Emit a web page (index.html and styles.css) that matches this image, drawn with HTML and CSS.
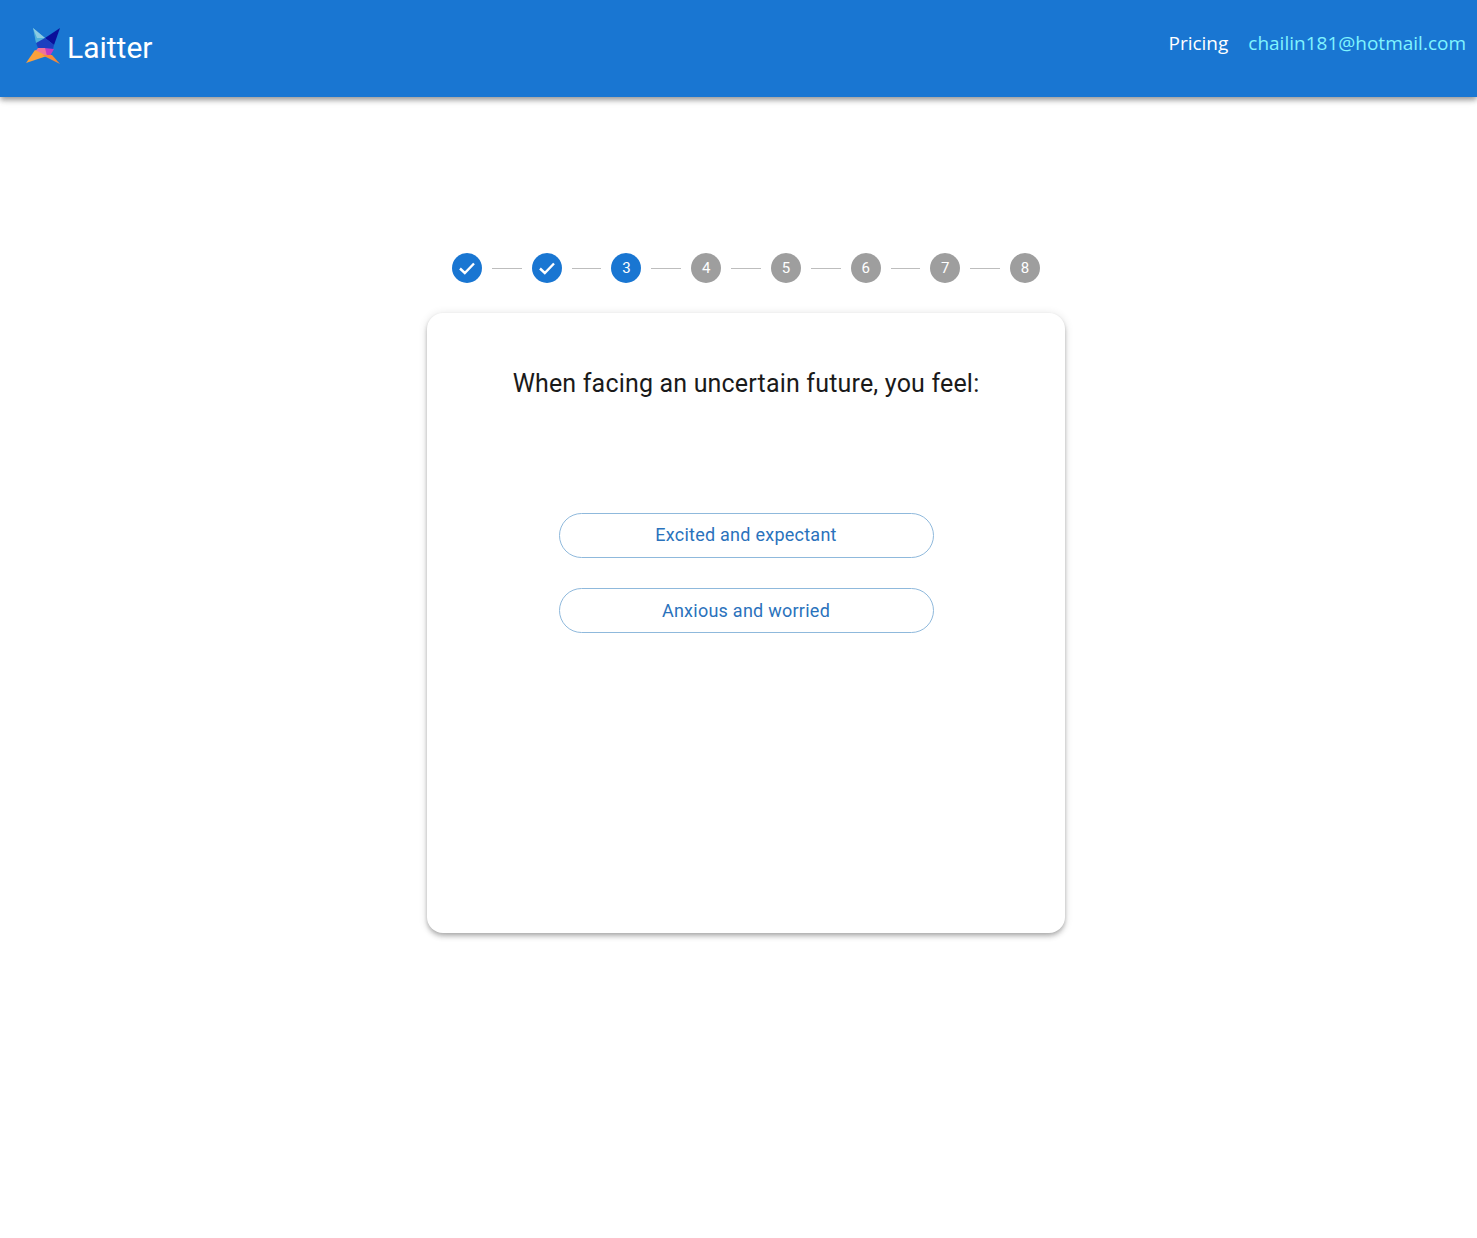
FILE: index.html
```html
<!DOCTYPE html>
<html lang="en">
<head>
<meta charset="utf-8">
<title>Laitter</title>
<link rel="stylesheet" href="styles.css">
</head>
<body>
<header class="topbar">
  <a class="brand" href="#">
    <svg class="logo" viewBox="0 0 36 36" width="36" height="36" aria-hidden="true">
      <polygon points="8,0 20,10 13,18 11,15" fill="#4fb0dc"/>
      <polygon points="8,0 20,10 12,10" fill="#8ccbe2"/>
      <polygon points="35,0 29,17 20,10" fill="#0a0f9a"/>
      <polygon points="20,10 29,17 28,21 13,20 11,15" fill="#1c3fc0"/>
      <polygon points="19,20 29,21 25,28 20,28" fill="#c23ac4"/>
      <polygon points="13,20 20,20 22,28 8,26" fill="#f0739a"/>
      <polygon points="10,22 22,28 1,35" fill="#fba13c"/>
      <polygon points="17,27 27,27 35,36" fill="#f58a3a"/>
    </svg>
    <span class="brand-name">Laitter</span>
  </a>
  <nav class="nav">
    <a class="nav-link" href="#">Pricing</a>
    <a class="nav-link nav-user" href="#">chailin181@hotmail.com</a>
  </nav>
</header>
<main class="main">
  <ol class="stepper">
    <li class="step step-active"><svg class="check" viewBox="0 0 24 24" width="24" height="24"><path d="M5 12.5 9.8 17 19 7.5" fill="none" stroke="#fff" stroke-width="2.4"/></svg></li>
    <li class="line"></li>
    <li class="step step-active"><svg class="check" viewBox="0 0 24 24" width="24" height="24"><path d="M5 12.5 9.8 17 19 7.5" fill="none" stroke="#fff" stroke-width="2.4"/></svg></li>
    <li class="line"></li>
    <li class="step step-active">3</li>
    <li class="line"></li>
    <li class="step">4</li>
    <li class="line"></li>
    <li class="step">5</li>
    <li class="line"></li>
    <li class="step">6</li>
    <li class="line"></li>
    <li class="step">7</li>
    <li class="line"></li>
    <li class="step">8</li>
  </ol>
  <section class="card">
    <h1 class="question">When facing an uncertain future, you feel:</h1>
    <div class="options">
      <button class="option" type="button">Excited and expectant</button>
      <button class="option" type="button">Anxious and worried</button>
    </div>
  </section>
</main>
</body>
</html>
```
FILE: styles.css
```css
* { box-sizing: border-box; }
html, body { margin: 0; padding: 0; }
body {
  background: #fff;
  font-family: Roboto, "Liberation Sans", sans-serif;
  min-height: 1238px;
}
a { text-decoration: none; }

.topbar {
  height: 97px;
  background: #1976d2;
  display: flex;
  justify-content: space-between;
  align-items: flex-start;
  padding: 0 11px 0 25px;
  box-shadow: 0 3px 5px -1px rgba(0,0,0,.25), 0 4px 5px 0 rgba(0,0,0,.14), 0 1px 10px 0 rgba(0,0,0,.12);
}
.brand {
  display: flex;
  align-items: center;
  gap: 6px;
  height: 91px;
}
.logo { display: block; }
.brand-name {
  color: #fff;
  font-size: 30px;
  line-height: 36px;
  margin-top: 4px;
}
.nav {
  display: flex;
  gap: 20px;
  padding-top: 29px;
}
.nav-link {
  color: #fff;
  font-family: "Open Sans", "Noto Sans", sans-serif;
  font-size: 19px;
  line-height: 28px;
}
.nav-user { color: #80f4ff; }

.main {
  display: flex;
  flex-direction: column;
  align-items: center;
  padding: 156px 0 0 15px;
}
.stepper {
  list-style: none;
  margin: 0 0 30px;
  padding: 0;
  width: 588px;
  display: flex;
  align-items: center;
}
.step {
  flex: none;
  width: 30px;
  height: 30px;
  border-radius: 50%;
  background: #9e9e9e;
  color: #fff;
  font-size: 15px;
  display: flex;
  align-items: center;
  justify-content: center;
}
.step-active { background: #1976d2; }
.line {
  flex: 1;
  height: 1px;
  margin: 0 10px;
  background: #bdbdbd;
}
.card {
  width: 638px;
  height: 620px;
  border-radius: 16px;
  background: #fff;
  box-shadow: 0 2px 4px -1px rgba(0,0,0,.2), 0 4px 5px 0 rgba(0,0,0,.14), 0 1px 10px 0 rgba(0,0,0,.12);
  padding-top: 53px;
}
.question {
  margin: 0;
  font-size: 25px;
  font-weight: 400;
  letter-spacing: .18px;
  line-height: 36px;
  color: #1a1a1a;
  text-align: center;
}
.options {
  display: flex;
  flex-direction: column;
  align-items: center;
  gap: 30.4px;
  margin-top: 110.8px;
}
.option {
  width: 375px;
  height: 45px;
  border-radius: 23px;
  border: 1px solid #8fb9dc;
  background: #fff;
  color: #2a72bc;
  font-family: Roboto, "Liberation Sans", sans-serif;
  font-size: 18px;
  letter-spacing: .25px;
  padding: 0 0 1px;
}
```
